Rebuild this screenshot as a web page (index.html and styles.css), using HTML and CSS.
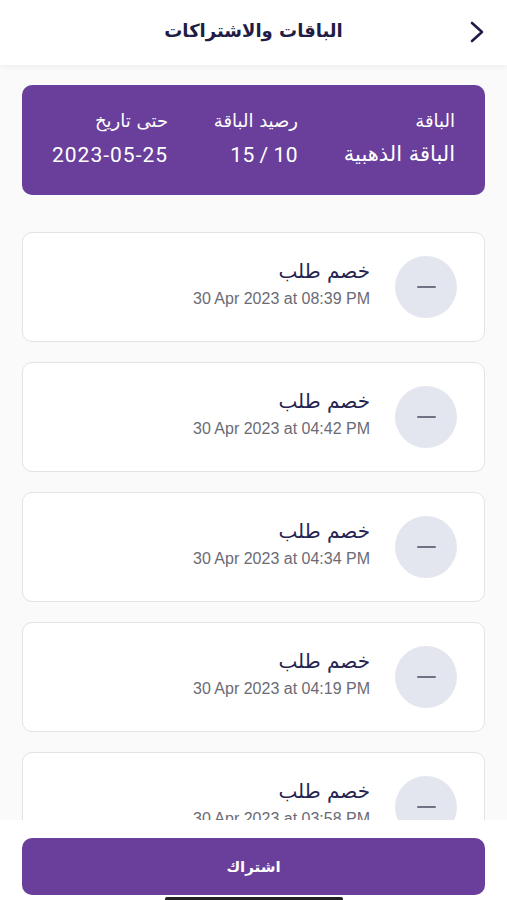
FILE: index.html
```html
<!DOCTYPE html>
<html lang="ar" dir="rtl">
<head>
<meta charset="utf-8">
<title>الباقات والاشتراكات</title>
<link rel="stylesheet" href="styles.css">
</head>
<body>
<div class="screen">
  <header class="topbar">
    <svg class="back" width="16" height="22" viewBox="0 0 16 22"><path d="M3 2 L13 11 L3 20" fill="none" stroke="#1f1d45" stroke-width="2.6" stroke-linecap="round" stroke-linejoin="round"/></svg>
    <h1 class="title">الباقات والاشتراكات</h1>
  </header>
  <main class="content">
    <section class="plan">
      <div class="plan-col">
        <div class="plan-label">الباقة</div>
        <div class="plan-value">الباقة الذهبية</div>
      </div>
      <div class="plan-col">
        <div class="plan-label">رصيد الباقة</div>
        <div class="plan-value num tight">15 / 10</div>
      </div>
      <div class="plan-col">
        <div class="plan-label">حتى تاريخ</div>
        <div class="plan-value num">2023-05-25</div>
      </div>
    </section>
    <ul class="list">
      <li class="item"><span class="icon"><span class="minus"></span></span><div class="info"><div class="item-title">خصم طلب</div><div class="item-date" dir="ltr">30 Apr 2023 at 08:39 PM</div></div></li>
      <li class="item"><span class="icon"><span class="minus"></span></span><div class="info"><div class="item-title">خصم طلب</div><div class="item-date" dir="ltr">30 Apr 2023 at 04:42 PM</div></div></li>
      <li class="item"><span class="icon"><span class="minus"></span></span><div class="info"><div class="item-title">خصم طلب</div><div class="item-date" dir="ltr">30 Apr 2023 at 04:34 PM</div></div></li>
      <li class="item"><span class="icon"><span class="minus"></span></span><div class="info"><div class="item-title">خصم طلب</div><div class="item-date" dir="ltr">30 Apr 2023 at 04:19 PM</div></div></li>
      <li class="item"><span class="icon"><span class="minus"></span></span><div class="info"><div class="item-title">خصم طلب</div><div class="item-date" dir="ltr">30 Apr 2023 at 03:58 PM</div></div></li>
    </ul>
  </main>
  <footer class="footer">
    <button class="subscribe">اشتراك</button>
    <div class="home-bar"></div>
  </footer>
</div>
</body>
</html>
```
FILE: styles.css
```css
* { box-sizing: border-box; }
html, body { margin: 0; padding: 0; }
body {
  font-family: "DejaVu Sans", "Noto Sans", sans-serif;
  background: #ffffff;
  width: 507px;
  height: 900px;
  overflow: hidden;
}
.screen {
  display: flex;
  flex-direction: column;
  height: 900px;
}
.topbar {
  height: 65px;
  flex: none;
  display: flex;
  align-items: center;
  justify-content: center;
  position: relative;
  background: #fff;
  box-shadow: 0 2px 6px rgba(0,0,0,0.05);
  z-index: 2;
}
.title {
  margin: 0;
  font-size: 18px;
  font-weight: bold;
  color: #1f1d45;
  margin-top: -4px;
}
.back {
  position: absolute;
  right: 22px;
  top: 21px;
}
.content {
  flex: 1;
  overflow: hidden;
  background: #fafafa;
  padding: 20px 22px 0 22px;
}
.plan {
  background: #6a3f9c;
  border-radius: 10px;
  height: 110px;
  display: flex;
  padding: 25px 30px 0 30px;
  justify-content: space-between;
  color: #fff;
}
.plan-col { display: flex; flex-direction: column; gap: 11px; }
.plan-label { font-size: 18px; }
.plan-value { font-size: 21px; }
.plan-value.num {
  font-family: Roboto, "Liberation Sans", sans-serif;
  font-size: 21px;
  letter-spacing: 1px;
  direction: ltr;
  text-align: right;
  margin-top: 1px;
}
.plan-value.tight { letter-spacing: 0.5px; word-spacing: -1px; }
.list {
  list-style: none;
  margin: 37px 0 0 0;
  padding: 0;
  display: flex;
  flex-direction: column;
  gap: 20px;
}
.item {
  height: 110px;
  flex: none;
  background: #fff;
  border: 1px solid #e3e3e6;
  border-radius: 10px;
  display: flex;
  align-items: center;
  padding: 0 27px 0 0;
  gap: 25px;
}
.icon {
  width: 62px;
  height: 62px;
  border-radius: 50%;
  background: #e4e6ef;
  display: flex;
  align-items: center;
  justify-content: center;
  flex: none;
}
.minus {
  width: 19px;
  height: 2px;
  background: #6f7184;
  border-radius: 1px;
}
.info { display: flex; flex-direction: column; gap: 7px; margin-top: -8px; }
.item-title { font-size: 20px; color: #252350; }
.item-date {
  font-family: "Liberation Sans", Arial, sans-serif;
  font-size: 16px;
  color: #6b6b75;
  text-align: right;
}
.footer {
  flex: none;
  height: 80px;
  background: #fff;
  padding: 18px 22px 0 22px;
  position: relative;
}
.subscribe {
  width: 100%;
  height: 57px;
  border: none;
  border-radius: 10px;
  background: #6a3f9c;
  color: #fff;
  font-family: "DejaVu Sans", sans-serif;
  font-size: 15px;
  font-weight: bold;
  padding: 0;
}
.home-bar {
  position: absolute;
  left: 165px;
  bottom: 0;
  width: 178px;
  height: 3px;
  background: #222;
  border-radius: 2px 2px 0 0;
}
```
